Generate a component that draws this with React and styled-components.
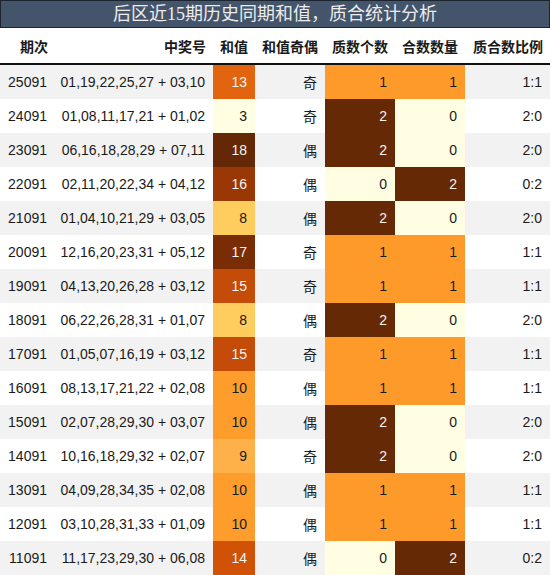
import React from "react";
import styled, { createGlobalStyle } from "styled-components";

const GlobalStyle = createGlobalStyle`
  html, body {
    margin: 0;
    padding: 0;
    background: #ffffff;
  }
  body {
    font-family: "Liberation Sans", "Noto Sans CJK SC", sans-serif;
  }
`;

const Wrap = styled.div`
  width: 550px;
`;

const Title = styled.div`
  height: 26px;
  border: 1px solid #1c2430;
  background: #44546a;
  color: #ececec;
  font-family: "Liberation Serif", "Noto Sans CJK SC", serif;
  font-size: 18px;
  line-height: 26px;
  text-align: center;
  white-space: nowrap;
`;

const cols = "55px 158px 42px 70px 70px 70px 85px";

const HeadRow = styled.div`
  display: grid;
  grid-template-columns: ${cols};
  height: 35px;
  border-bottom: 2px solid #111;
  background: #fff;
`;

const HeadCell = styled.div`
  display: flex;
  align-items: center;
  justify-content: flex-end;
  padding-right: 7px;
  font-size: 14px;
  font-weight: bold;
  color: #1a1a1a;
  white-space: nowrap;
`;

const Row = styled.div`
  display: grid;
  grid-template-columns: ${cols};
  height: 34px;
  background: ${(p) => (p.$odd ? "#f2f2f2" : "#ffffff")};
`;

const Cell = styled.div`
  display: flex;
  align-items: center;
  justify-content: flex-end;
  padding-right: 8px;
  font-size: 14px;
  color: ${(p) => p.$fg || "#1a1a1a"};
  background: ${(p) => p.$bg || "transparent"};
  white-space: nowrap;
`;

const sumColors = {
  3: "#fffde2",
  8: "#fecd5e",
  9: "#feb049",
  10: "#fe9c2c",
  13: "#e2640f",
  14: "#d05207",
  15: "#c44c08",
  16: "#993805",
  17: "#7a2d05",
  18: "#642806",
};

const countColors = { 0: "#fffee3", 1: "#fe9a2a", 2: "#662906" };

const lightText = (v) => v >= 13;

const data = [
  ["25091", "01,19,22,25,27 + 03,10", 13, "奇", 1, 1, "1:1"],
  ["24091", "01,08,11,17,21 + 01,02", 3, "奇", 2, 0, "2:0"],
  ["23091", "06,16,18,28,29 + 07,11", 18, "偶", 2, 0, "2:0"],
  ["22091", "02,11,20,22,34 + 04,12", 16, "偶", 0, 2, "0:2"],
  ["21091", "01,04,10,21,29 + 03,05", 8, "偶", 2, 0, "2:0"],
  ["20091", "12,16,20,23,31 + 05,12", 17, "奇", 1, 1, "1:1"],
  ["19091", "04,13,20,26,28 + 03,12", 15, "奇", 1, 1, "1:1"],
  ["18091", "06,22,26,28,31 + 01,07", 8, "偶", 2, 0, "2:0"],
  ["17091", "01,05,07,16,19 + 03,12", 15, "奇", 1, 1, "1:1"],
  ["16091", "08,13,17,21,22 + 02,08", 10, "偶", 1, 1, "1:1"],
  ["15091", "02,07,28,29,30 + 03,07", 10, "偶", 2, 0, "2:0"],
  ["14091", "10,16,18,29,32 + 02,07", 9, "奇", 2, 0, "2:0"],
  ["13091", "04,09,28,34,35 + 02,08", 10, "偶", 1, 1, "1:1"],
  ["12091", "03,10,28,31,33 + 01,09", 10, "偶", 1, 1, "1:1"],
  ["11091", "11,17,23,29,30 + 06,08", 14, "偶", 0, 2, "0:2"],
];

const headers = ["期次", "中奖号", "和值", "和值奇偶", "质数个数", "合数数量", "质合数比例"];

export default function App() {
  return (
    <Wrap>
      <GlobalStyle />
      <Title>后区近15期历史同期和值，质合统计分析</Title>
      <HeadRow>
        {headers.map((h) => (
          <HeadCell key={h}>{h}</HeadCell>
        ))}
      </HeadRow>
      {data.map((r, i) => (
        <Row key={r[0]} $odd={i % 2 === 0}>
          <Cell>{r[0]}</Cell>
          <Cell>{r[1]}</Cell>
          <Cell $bg={sumColors[r[2]]} $fg={lightText(r[2]) ? "#f4f4f4" : undefined}>
            {r[2]}
          </Cell>
          <Cell>{r[3]}</Cell>
          <Cell $bg={countColors[r[4]]} $fg={r[4] === 2 ? "#f4f4f4" : undefined}>
            {r[4]}
          </Cell>
          <Cell $bg={countColors[r[5]]} $fg={r[5] === 2 ? "#f4f4f4" : undefined}>
            {r[5]}
          </Cell>
          <Cell>{r[6]}</Cell>
        </Row>
      ))}
    </Wrap>
  );
}
